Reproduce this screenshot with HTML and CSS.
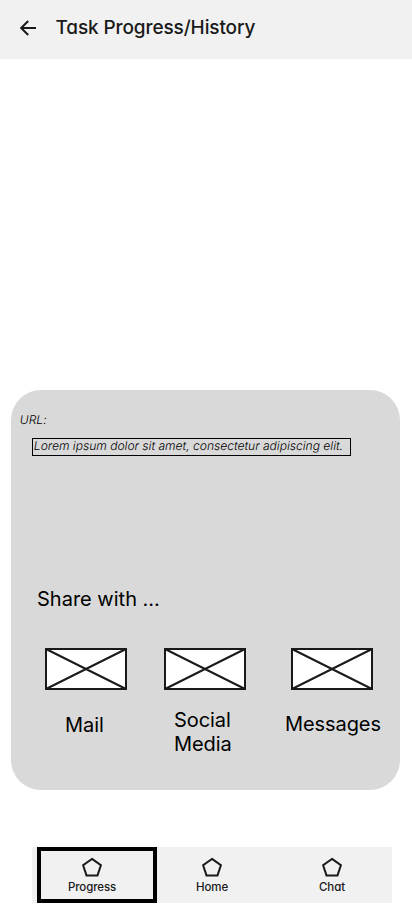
FILE: index.html
```
<!DOCTYPE html>
<html lang="en">
<head>
<meta charset="utf-8">
<title>Task Progress/History</title>
<link rel="stylesheet" href="styles.css">
</head>
<body>
<header class="topbar">
  <svg class="back" width="16" height="16" viewBox="0 0 16 16"><path d="M16 8H1.5M8.2 1L1.2 8L8.2 15"/></svg>
  <h1 class="title">Task Progress/History</h1>
</header>
<main class="sheet">
  <div class="url-label">URL:</div>
  <div class="url-box"><span class="url-text">Lorem ipsum dolor sit amet, consectetur adipiscing elit.</span></div>
  <h2 class="share">Share with ...</h2>
  <div class="options">
    <div class="option mail">
      <svg class="thumb" width="82" height="42" viewBox="0 0 82 42"><rect x="1" y="1" width="80" height="40"/><path d="M1 1L81 41M81 1L1 41"/></svg>
      <span class="name">Mail</span>
    </div>
    <div class="option social">
      <svg class="thumb" width="82" height="42" viewBox="0 0 82 42"><rect x="1" y="1" width="80" height="40"/><path d="M1 1L81 41M81 1L1 41"/></svg>
      <span class="name">Social<br>Media</span>
    </div>
    <div class="option messages">
      <svg class="thumb" width="82" height="42" viewBox="0 0 82 42"><rect x="1" y="1" width="80" height="40"/><path d="M1 1L81 41M81 1L1 41"/></svg>
      <span class="name">Messages</span>
    </div>
  </div>
</main>
<nav class="nav">
  <a class="tab active"><svg class="pentagon" width="20" height="20" viewBox="0 0 20 20"><path d="M10 1.9L18.9 8.2L15.5 18.4H4.5L1.1 8.2Z"/></svg><span class="tab-name">Progress</span></a>
  <a class="tab"><svg class="pentagon" width="20" height="20" viewBox="0 0 20 20"><path d="M10 1.9L18.9 8.2L15.5 18.4H4.5L1.1 8.2Z"/></svg><span class="tab-name">Home</span></a>
  <a class="tab"><svg class="pentagon" width="20" height="20" viewBox="0 0 20 20"><path d="M10 1.9L18.9 8.2L15.5 18.4H4.5L1.1 8.2Z"/></svg><span class="tab-name">Chat</span></a>
</nav>
</body>
</html>
```
FILE: styles.css
```
* { box-sizing: border-box; }
body {
  margin: 0;
  height: 917px;
  overflow: hidden;
  background: #fff;
  color: #000;
  font-family: Inter, "Liberation Sans", sans-serif;
}
svg { display: block; flex: none; fill: none; stroke: #1a1a1a; stroke-width: 2; }
.topbar {
  display: flex;
  align-items: center;
  height: 59px;
  padding: 0 20px 4px;
  gap: 20px;
  background: #f1f1f1;
}
.back { margin-top: 1px; }
.title {
  margin: 0 0 0 -0.5px;
  color: #1a1a1a;
  font-size: 19px;
  line-height: 24px;
  font-weight: 450;
  letter-spacing: -0.11px;
  font-feature-settings: "cv11" 1;
  white-space: nowrap;
}
.sheet {
  width: 389px;
  height: 400px;
  margin: 331px 0 0 11px;
  padding-top: 22px;
  border-radius: 30px;
  background: #d9d9d9;
}
/* Slanted upright letters keep the two-storey "a". */
.url-label, .url-text {
  font-size: 12px;
  line-height: 16px;
  font-weight: 300;
  letter-spacing: 0.035px;
  white-space: nowrap;
  transform: skewX(-9.4deg);
}
.url-label { margin-left: 9px; }
.url-box {
  width: 319px;
  height: 18px;
  margin: 10px 0 0 21px;
  padding-left: 1px;
  border: 1px solid #000;
}
.url-text { display: block; margin-top: -1px; }
.share {
  margin: 131px 0 0 26px;
  font-size: 20px;
  line-height: 24px;
  font-weight: 380;
}
.options { display: flex; margin: 37px 0 0 34px; }
.option { width: 82px; }
.social { margin-left: 37px; }
.messages { margin-left: 45px; }
.thumb rect { fill: #fff; }
.name { display: block; font-size: 20px; line-height: 24px; font-weight: 380; letter-spacing: -0.08px; white-space: nowrap; }
.mail .name { margin: 23px 0 0 20px; }
.social .name { margin: 18px 0 0 10px; }
.messages .name { margin: 22px 0 0 -6px; }
.nav {
  display: grid;
  grid-template-columns: repeat(3, 120px);
  width: 360px;
  height: 56px;
  margin: 57px 0 0 32px;
  background: #f1f1f1;
}
.tab {
  position: relative;
  display: flex;
  flex-direction: column;
  align-items: center;
  padding-top: 10px;
}
.active::after {
  content: "";
  position: absolute;
  inset: 0 -5px 0 5px;
  border: 4px solid #000;
}
.tab-name {
  margin-top: 2px;
  color: #1a1a1a;
  font-size: 11.5px;
  line-height: 16px;
  font-weight: 450;
  letter-spacing: -0.1px;
  font-feature-settings: "cv11" 1;
}
```
